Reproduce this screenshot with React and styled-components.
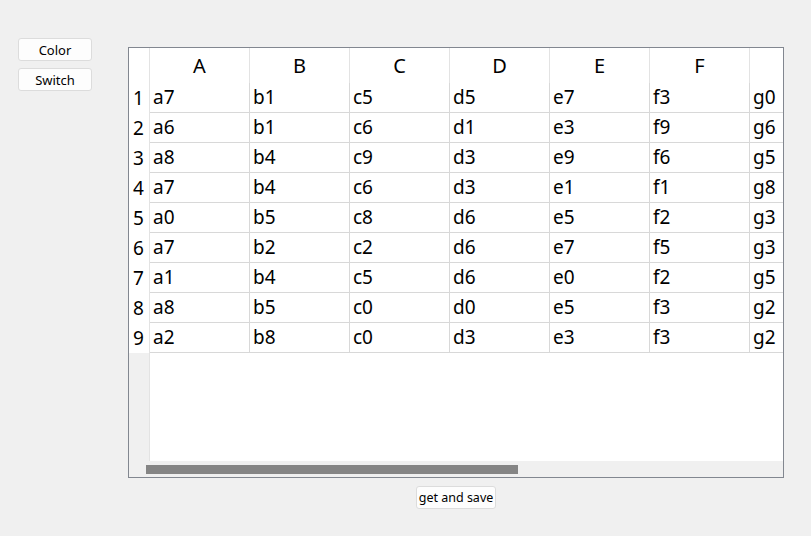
import React from 'react'
import styled, { createGlobalStyle } from 'styled-components'

const GlobalStyle = createGlobalStyle`
    html, body {
        margin: 0;
        padding: 0;
        background-color: #f0f0f0;
        font-family: "Noto Sans", "Noto Sans CJK SC", sans-serif;
    }
`

const columns = ['A', 'B', 'C', 'D', 'E', 'F', '']

const data = [
    ['a7', 'b1', 'c5', 'd5', 'e7', 'f3', 'g0'],
    ['a6', 'b1', 'c6', 'd1', 'e3', 'f9', 'g6'],
    ['a8', 'b4', 'c9', 'd3', 'e9', 'f6', 'g5'],
    ['a7', 'b4', 'c6', 'd3', 'e1', 'f1', 'g8'],
    ['a0', 'b5', 'c8', 'd6', 'e5', 'f2', 'g3'],
    ['a7', 'b2', 'c2', 'd6', 'e7', 'f5', 'g3'],
    ['a1', 'b4', 'c5', 'd6', 'e0', 'f2', 'g5'],
    ['a8', 'b5', 'c0', 'd0', 'e5', 'f3', 'g2'],
    ['a2', 'b8', 'c0', 'd3', 'e3', 'f3', 'g2'],
]

const Page = styled.div`
    width: 811px;
    height: 536px;
    display: flex;
    overflow: hidden;
`

const Sidebar = styled.div`
    width: 110px;
    padding: 38px 0 0 18px;
    display: flex;
    flex-direction: column;
    gap: 7px;
`

const Button = styled.button`
    width: ${p => p.$w || 74}px;
    height: 23px;
    padding: 1px 0 0;
    background-color: #fdfdfd;
    border: 1px solid #dcdcdc;
    border-radius: 3px;
    font-family: "Noto Sans", sans-serif;
    font-size: ${p => p.$small ? 12.5 : 13}px;
    line-height: 20px;
    color: #000;
    cursor: pointer;
`

const Main = styled.div`
    padding-top: 47px;
    width: 656px;
    display: flex;
    flex-direction: column;
    align-items: center;
`

const Frame = styled.div`
    width: 654px;
    height: 429px;
    border: 1px solid #828790;
    background-color: #ffffff;
    display: flex;
    flex-direction: column;
`

const Viewport = styled.div`
    flex: 1;
    display: flex;
    overflow: hidden;
`

const RowHeader = styled.div`
    width: 20px;
    flex-shrink: 0;
    background-color: #f0f0f0;
    border-right: 1px solid #e3e3e3;
    display: flex;
    flex-direction: column;
`

const Corner = styled.div`
    height: 35px;
    background-color: #ffffff;
`

const RowNum = styled.div`
    height: 30px;
    background-color: #ffffff;
    font-size: 19px;
    line-height: 30px;
    padding-left: 4px;
    color: #000;
`

const Grid = styled.div`
    display: flex;
    flex-direction: column;
`

const Row = styled.div`
    display: flex;
    height: ${p => p.$head ? 35 : 30}px;
`

const HeadCell = styled.div`
    width: 99px;
    flex-shrink: 0;
    border-right: 1px solid #e3e3e3;
    font-size: 20px;
    line-height: 35px;
    text-align: center;
    color: #000;
`

const Cell = styled.div`
    width: 96px;
    flex-shrink: 0;
    padding-left: 3px;
    border-right: 1px solid #d8d8d8;
    border-bottom: 1px solid #d8d8d8;
    font-size: 19px;
    line-height: 29px;
    color: #000;
`

const ScrollTrack = styled.div`
    height: 16px;
    background-color: #f0f0f0;
    display: flex;
    align-items: center;
    padding-left: 17px;
`

const ScrollHandle = styled.div`
    width: 372px;
    height: 9px;
    background-color: #858585;
`

const Footer = styled.div`
    margin-top: 7px;
`

const App = () => {
    return (
        <>
            <GlobalStyle />
            <Page>
                <Sidebar>
                    <Button>Color</Button>
                    <Button>Switch</Button>
                </Sidebar>
                <Main>
                    <Frame>
                        <Viewport>
                            <RowHeader>
                                <Corner />
                                {data.map((_, i) => (
                                    <RowNum key={i}>{i + 1}</RowNum>
                                ))}
                            </RowHeader>
                            <Grid>
                                <Row $head>
                                    {columns.map((c, i) => (
                                        <HeadCell key={i}>{c}</HeadCell>
                                    ))}
                                </Row>
                                {data.map((row, r) => (
                                    <Row key={r}>
                                        {row.map((v, c) => (
                                            <Cell key={c}>{v}</Cell>
                                        ))}
                                    </Row>
                                ))}
                            </Grid>
                        </Viewport>
                        <ScrollTrack>
                            <ScrollHandle />
                        </ScrollTrack>
                    </Frame>
                    <Footer>
                        <Button $w={80} $small>get and save</Button>
                    </Footer>
                </Main>
            </Page>
        </>
    )
}

export default App
